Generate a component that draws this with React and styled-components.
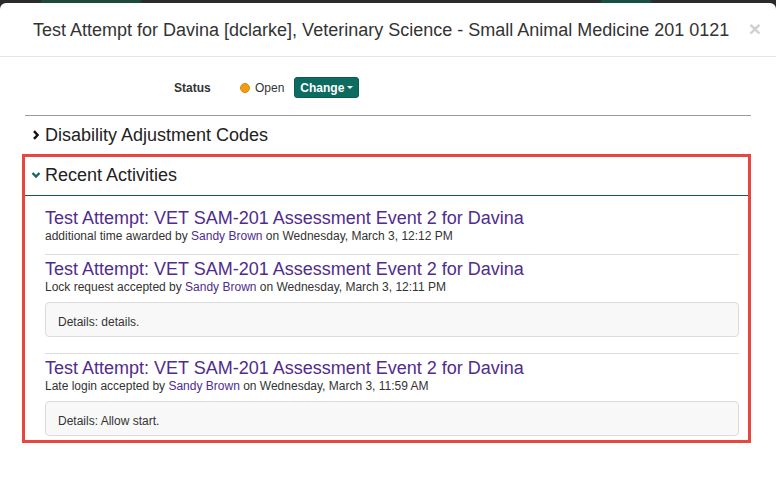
import React from "react";
import styled, { createGlobalStyle } from "styled-components";

const GlobalStyle = createGlobalStyle`
  html, body {
    margin: 0;
    padding: 0;
    background: #2e302f;
  }
  body {
    font-family: "Liberation Sans", Arial, sans-serif;
    color: #333;
  }
`;

const Backdrop = styled.div`
  height: 486px;
  overflow: hidden;
  padding-top: 3px;
  box-sizing: border-box;
  background: linear-gradient(
    90deg,
    #2b2b2b 0px,
    #2b2b2b 40px,
    #1d4a3b 42px,
    #1d4a3b 140px,
    #2b2b2b 142px,
    #2b2b2b 600px,
    #174f45 602px,
    #174f45 650px,
    #2b2b2b 652px
  );
`;

const Modal = styled.div`
  background: #fff;
  height: 100%;
  border-radius: 6px 6px 0 0;
`;

const Header = styled.div`
  display: flex;
  align-items: flex-start;
  padding: 17px 15px 16px 33px;
  border-bottom: 1px solid #e5e5e5;
`;

const Title = styled.h4`
  margin: 0;
  font-size: 18px;
  line-height: 20px;
  font-weight: normal;
  color: #333;
`;

const Close = styled.button`
  margin-left: auto;
  border: none;
  background: none;
  padding: 0;
  font-family: "Liberation Sans", Arial, sans-serif;
  font-size: 21px;
  font-weight: bold;
  line-height: 18px;
  color: #d0d0d0;
  cursor: pointer;
`;

const Body = styled.div`
  padding: 0 25px;
`;

const StatusRow = styled.div`
  display: flex;
  align-items: center;
  padding: 20px 0 17px 149px;
  border-bottom: 1px solid #9a9a9a;
  font-size: 12px;
`;

const Label = styled.span`
  width: 66px;
  font-weight: bold;
  color: #333;
`;

const Dot = styled.span`
  width: 10px;
  height: 10px;
  border-radius: 50%;
  background: #f39c12;
  border: 1px solid #d68910;
  box-sizing: border-box;
  margin-right: 5px;
`;

const StatusText = styled.span`
  color: #333;
  margin-right: 10px;
`;

const ChangeButton = styled.button`
  height: 21px;
  padding: 0 5px;
  border: 1px solid #0a5c52;
  border-radius: 3px;
  background: #0d6b60;
  color: #fff;
  font-family: "Liberation Sans", Arial, sans-serif;
  font-size: 12px;
  font-weight: bold;
  display: flex;
  align-items: center;
  gap: 3px;
`;

const Caret = styled.span`
  width: 0;
  height: 0;
  border-left: 3px solid transparent;
  border-right: 3px solid transparent;
  border-top: 3px solid #fff;
`;

const SectionHeader = styled.div`
  display: flex;
  align-items: center;
  padding: 9px 0;
  font-size: 18px;
  line-height: 20px;
  color: #222;
`;

const ChevronBox = styled.span`
  width: 20px;
  display: flex;
  align-items: center;
  justify-content: center;
  padding-left: 1px;
  box-sizing: border-box;
`;

const Panel = styled.div`
  margin: 3px 3px 0 0;
  outline: 3px solid #e8463e;
`;

const PanelHeader = styled(SectionHeader)`
  padding: 8px 0 10px;
  border-bottom: 1px solid #16594f;
`;

const PanelBody = styled.div`
  height: 244px;
  overflow: hidden;
  padding: 8px 9px 0 20px;
  box-sizing: border-box;
`;

const Activity = styled.div`
  padding: 5px 0 ${(p) => (p.$hasDetails ? "16px" : "10px")};
  border-bottom: 1px solid #dddddd;
`;

const ActivityTitle = styled.a`
  display: block;
  font-size: 18px;
  line-height: 19px;
  color: #4f2c8d;
  text-decoration: none;
`;

const Meta = styled.div`
  font-size: 12px;
  line-height: 16px;
  color: #333;
`;

const Person = styled.a`
  color: #4f2c8d;
  text-decoration: none;
`;

const Well = styled.div`
  margin-top: 7px;
  padding: 11px 12px 6px;
  font-size: 12px;
  line-height: 16px;
  color: #333;
  background: #f8f8f8;
  border: 1px solid #dcdcdc;
  border-radius: 4px;
`;

const Chevron = ({ down, color }) => (
  <svg width="10" height="10" viewBox="0 0 10 10">
    {down ? (
      <path d="M1.5 3 L5 6.5 L8.5 3" fill="none" stroke={color} strokeWidth="2.4" />
    ) : (
      <path d="M3 1.2 L6.6 5 L3 8.8" fill="none" stroke={color} strokeWidth="2.4" />
    )}
  </svg>
);

const activities = [
  { action: "additional time awarded", time: "12:12 PM" },
  { action: "Lock request accepted", time: "12:11 PM", details: "details." },
  { action: "Late login accepted", time: "11:59 AM", details: "Allow start." },
];

export default function App() {
  return (
    <>
      <GlobalStyle />
      <Backdrop>
        <Modal>
          <Header>
            <Title>
              Test Attempt for Davina [dclarke], Veterinary Science - Small Animal Medicine 201 0121
            </Title>
            <Close aria-label="Close">×</Close>
          </Header>
          <Body>
            <StatusRow>
              <Label>Status</Label>
              <Dot />
              <StatusText>Open</StatusText>
              <ChangeButton>
                Change <Caret />
              </ChangeButton>
            </StatusRow>
            <SectionHeader>
              <ChevronBox>
                <Chevron color="#111" />
              </ChevronBox>
              Disability Adjustment Codes
            </SectionHeader>
            <Panel>
              <PanelHeader>
                <ChevronBox>
                  <Chevron down color="#16695e" />
                </ChevronBox>
                Recent Activities
              </PanelHeader>
              <PanelBody>
                {activities.map((a, i) => (
                  <Activity key={i} $hasDetails={!!a.details}>
                    <ActivityTitle href="#">
                      Test Attempt: VET SAM-201 Assessment Event 2 for Davina
                    </ActivityTitle>
                    <Meta>
                      {a.action} by <Person href="#">Sandy Brown</Person> on Wednesday, March 3, {a.time}
                    </Meta>
                    {a.details && <Well>Details: {a.details}</Well>}
                  </Activity>
                ))}
              </PanelBody>
            </Panel>
          </Body>
        </Modal>
      </Backdrop>
    </>
  );
}
